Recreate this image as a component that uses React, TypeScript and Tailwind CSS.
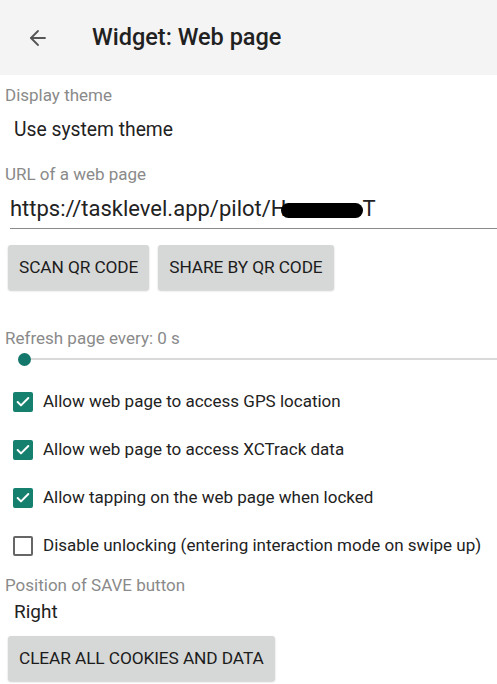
import { ArrowLeft, Check } from 'lucide-react';

const checks = [
  { label: 'Allow web page to access GPS location', on: true },
  { label: 'Allow web page to access XCTrack data', on: true },
  { label: 'Allow tapping on the web page when locked', on: true },
  { label: 'Disable unlocking (entering interaction mode on swipe up)', on: false },
];

function Btn({ children }: { children: string }) {
  return (
    <button className="h-[45px] px-[11px] bg-[#d6d7d7] rounded-[3px] shadow-[0_1px_2px_rgba(0,0,0,0.2)] text-[17.3px] font-normal text-[#1c1c1c] tracking-[-0.1px]">
      {children}
    </button>
  );
}

export default function App() {
  return (
    <div className="w-[497px] h-[684px] bg-white overflow-hidden font-['Roboto',sans-serif]">
      {/* toolbar */}
      <div className="h-[75px] bg-[#f4f4f4] flex items-center">
        <ArrowLeft className="ml-[26px] w-[24px] h-[24px] text-[#555]" strokeWidth={1.8} />
        <h1 className="ml-[42px] text-[23.5px] font-medium text-[#212121]">Widget: Web page</h1>
      </div>

      <div className="pt-[10px]">
        <div className="pl-[5px] text-[17px] text-[#8a8a8a] leading-[20px]">Display theme</div>
        <div className="pl-[14px] mt-[14px] text-[19.3px] text-[#222] leading-[22px]">Use system theme</div>

        <div className="pl-[5px] mt-[23px] text-[17px] text-[#8a8a8a] leading-[20px]">URL of a web page</div>
        <div className="ml-[10px] mt-[11px] border-b border-[#8a8a8a] pb-[5px]">
          <div className="flex items-center text-[22px] text-[#222] leading-[28px]">
            https://tasklevel.app/pilot/H
            <span className="inline-block w-[82px] h-[15px] bg-black rounded-full -ml-[6px] mt-[3px]" />
            T
          </div>
        </div>

        <div className="flex gap-[9px] pl-[8px] mt-[16px]">
          <Btn>SCAN QR CODE</Btn>
          <Btn>SHARE BY QR CODE</Btn>
        </div>

        <div className="pl-[5px] mt-[38px] text-[17px] text-[#8a8a8a] leading-[20px]">Refresh page every: 0 s</div>
        <div className="relative mt-[5px] h-[13px] ml-[18px]">
          <div className="absolute left-[6px] right-0 top-[5px] h-[2px] bg-[#d9d9d9]" />
          <div className="absolute left-0 top-0 w-[13px] h-[13px] rounded-full bg-[#14776b]" />
        </div>

        <div className="mt-[26px] flex flex-col gap-[28px] pl-[13px]">
          {checks.map(c => (
            <div key={c.label} className="flex items-center h-[20px]">
              {c.on ? (
                <span className="w-[20px] h-[20px] rounded-[2px] bg-[#16806f] flex items-center justify-center">
                  <Check className="w-[16px] h-[16px] text-white" strokeWidth={3} />
                </span>
              ) : (
                <span className="w-[20px] h-[20px] rounded-[2px] border-2 border-[#666]" />
              )}
              <span className="ml-[10px] text-[17px] text-[#222]">{c.label}</span>
            </div>
          ))}
        </div>

        <div className="pl-[5px] mt-[19px] text-[17px] text-[#8a8a8a] leading-[20px]">Position of SAVE button</div>
        <div className="pl-[14px] mt-[6px] text-[19px] text-[#222] leading-[22px]">Right</div>
        <div className="pl-[8px] mt-[13px]">
          <Btn>CLEAR ALL COOKIES AND DATA</Btn>
        </div>
      </div>
    </div>
  );
}
